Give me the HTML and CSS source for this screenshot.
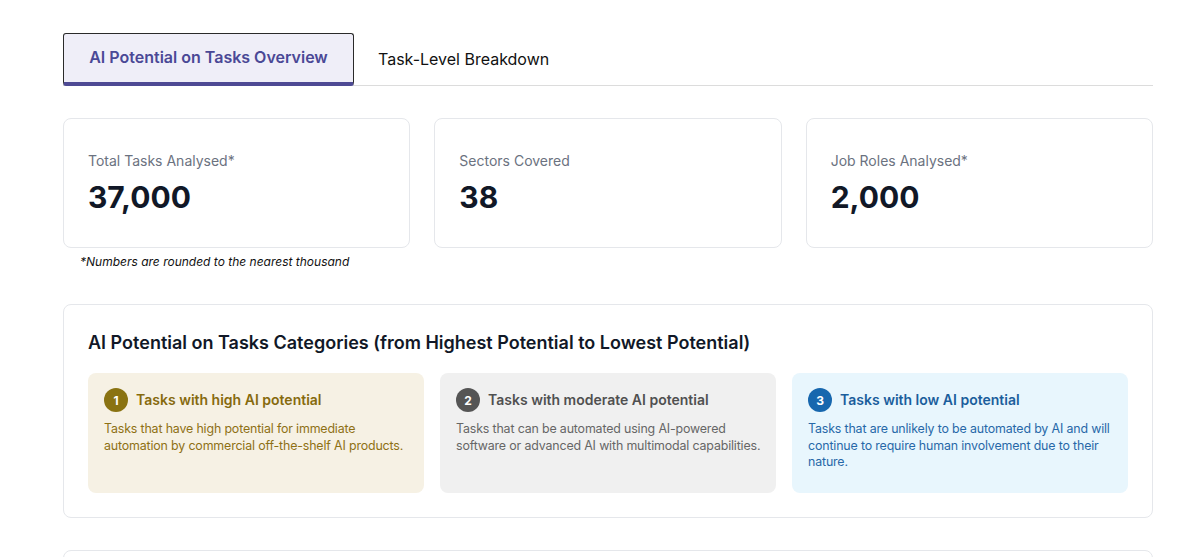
FILE: index.html
```html
<!DOCTYPE html>
<html>
<head>
<meta charset="utf-8">
<link rel="stylesheet" href="styles.css">
</head>
<body>
<div class="page">
  <div class="tabs">
    <div class="tab active">AI Potential on Tasks Overview</div>
    <div class="tab">Task-Level Breakdown</div>
  </div>

  <div class="stats">
    <div class="stat">
      <div class="stat-label">Total Tasks Analysed*</div>
      <div class="stat-value">37,000</div>
    </div>
    <div class="stat">
      <div class="stat-label">Sectors Covered</div>
      <div class="stat-value">38</div>
    </div>
    <div class="stat">
      <div class="stat-label">Job Roles Analysed*</div>
      <div class="stat-value">2,000</div>
    </div>
  </div>
  <div class="footnote">*Numbers are rounded to the nearest thousand</div>

  <div class="panel">
    <h2 class="panel-title">AI Potential on Tasks Categories (from Highest Potential to Lowest Potential)</h2>
    <div class="cats">
      <div class="cat high">
        <div class="cat-head"><span class="num">1</span><span class="cat-title">Tasks with high AI potential</span></div>
        <p class="cat-desc">Tasks that have high potential for immediate automation by commercial off-the-shelf AI products.</p>
      </div>
      <div class="cat mod">
        <div class="cat-head"><span class="num">2</span><span class="cat-title">Tasks with moderate AI potential</span></div>
        <p class="cat-desc">Tasks that can be automated using AI-powered software or advanced AI with multimodal capabilities.</p>
      </div>
      <div class="cat low">
        <div class="cat-head"><span class="num">3</span><span class="cat-title">Tasks with low AI potential</span></div>
        <p class="cat-desc">Tasks that are unlikely to be automated by AI and will continue to require human involvement due to their nature.</p>
      </div>
    </div>
  </div>

  <div class="panel next"></div>
</div>
</body>
</html>
```

FILE: styles.css
```css
* { box-sizing: border-box; }
html, body { margin: 0; padding: 0; background: #ffffff; }
body { font-family: Inter, "Noto Sans", Arial, sans-serif; color: #111827; }

.page {
  width: 1090px;
  margin-left: 63px;
  padding-top: 32px;
}

.tabs {
  display: flex;
  align-items: stretch;
  border-bottom: 1px solid #dcdcdc;
  height: 54px;
}
.tab {
  display: flex;
  align-items: center;
  padding: 0 24px;
  font-size: 16px;
  color: #111111;
}
.tab.active {
  width: 291px;
  justify-content: center;
  padding: 0 0 3px;
  background: #efeef8;
  color: #4a4896;
  font-weight: 600;
  border: 1px solid #2a2a2a;
  border-bottom: 4px solid #4e4a94;
  border-radius: 3px;
  margin-top: 1px;
  height: 53px;
}

.stats {
  display: grid;
  grid-template-columns: repeat(3, 1fr);
  gap: 24px;
  margin-top: 32px;
}
.stat {
  border: 1px solid #e5e7eb;
  border-radius: 8px;
  padding: 32px 24px 27px;
  height: 130px;
}
.stat-label {
  font-size: 14px;
  line-height: 20px;
  color: #6b7280;
}
.stat-value {
  font-size: 30px;
  font-weight: 700;
  line-height: 40px;
  margin-top: 6px;
  color: #111827;
}

.footnote {
  font-size: 12px;
  font-style: italic;
  color: #111111;
  margin: 6px 0 0 17px;
  line-height: 16px;
}

.panel {
  border: 1px solid #e5e7eb;
  border-radius: 8px;
  padding: 24px;
  margin-top: 34px;
}
.panel-title {
  margin: 0;
  font-size: 18px;
  font-weight: 600;
  line-height: 28px;
  color: #111827;
}
.cats {
  display: grid;
  grid-template-columns: repeat(3, 1fr);
  gap: 16px;
  margin-top: 16px;
}
.cat {
  border-radius: 8px;
  padding: 15px 10px 16px 16px;
  height: 120px;
}
.cat-head {
  display: flex;
  align-items: center;
  gap: 8px;
}
.num {
  width: 24px;
  height: 24px;
  border-radius: 50%;
  display: flex;
  align-items: center;
  justify-content: center;
  color: #ffffff;
  font-size: 12px;
  font-weight: 700;
  flex: none;
}
.cat-title {
  font-size: 14px;
  font-weight: 600;
  line-height: 22px;
}
.cat-desc {
  margin: 9px 0 0;
  font-size: 12.4px;
  line-height: 16.5px;
  letter-spacing: -0.15px;
}
.high { background: #f6f1e4; }
.high .num { background: #8a7312; }
.high .cat-title { color: #866a0e; }
.high .cat-desc { color: #8e7014; }
.mod { background: #f0f0f0; }
.mod .num { background: #555555; }
.mod .cat-title { color: #505050; }
.mod .cat-desc { color: #666666; }
.low { background: #e8f6fd; }
.low .num { background: #1767ae; }
.low .cat-title { color: #1b5e9c; }
.low .cat-desc { color: #2768a8; }

.panel.next {
  margin-top: 32px;
  height: 80px;
}
```
